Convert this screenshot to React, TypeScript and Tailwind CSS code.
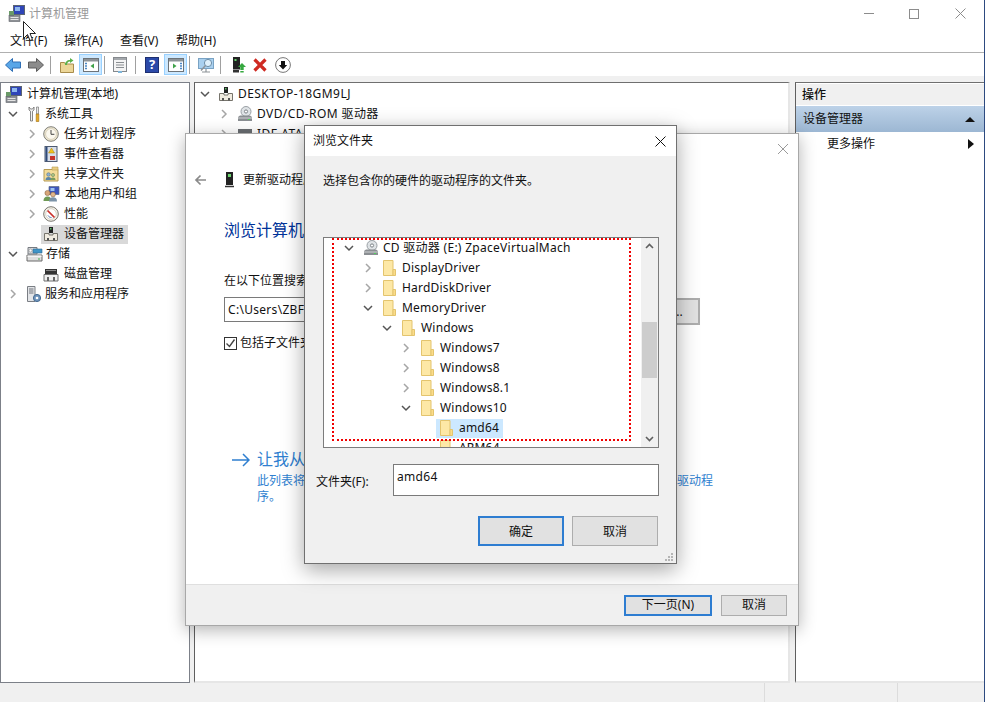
import React from 'react';

const Chevron = ({ open }: { open?: boolean }) => (
  <svg width="12" height="12" viewBox="0 0 12 12" fill="none" className="shrink-0">
    {open ? (
      <path d="M2 4l4 4 4-4" stroke="#555" strokeWidth="1.5" />
    ) : (
      <path d="M4 2l4 4-4 4" stroke="#a6a6a6" strokeWidth="1.5" />
    )}
  </svg>
);

const Folder = () => (
  <svg width="14" height="16" viewBox="0 0 14 16" className="shrink-0">
    <path d="M1.5 0.5h9.5v15h-9.5z" fill="#fde8a6" stroke="#e3c46e" />
    <path d="M11 9.5h2.5v6h-2.5z" fill="#fbdc8a" stroke="#e3c46e" />
  </svg>
);

const CdDrive = () => (
  <svg width="16" height="16" viewBox="0 0 16 16" className="shrink-0">
    <circle cx="9" cy="5.5" r="5" fill="#dfe3e6" stroke="#9aa0a5" />
    <circle cx="9" cy="5.5" r="1.6" fill="#fff" stroke="#7d8388" />
    <path d="M1 11l2-1.5h10l2 1.5v4H1z" fill="#8a8e92" />
    <path d="M1 11.5h14v1H1z" fill="#d0d3d5" />
    <rect x="11" y="13" width="2" height="1" fill="#4fd05a" />
  </svg>
);

const AtaDrive = () => (
  <svg width="16" height="16" viewBox="0 0 16 16" className="shrink-0">
    <path d="M1 3h14v4H1z" fill="#6a6e72" />
    <path d="M1 7h14v5H1z" fill="#bfc3c6" />
    <rect x="11" y="9" width="2" height="1" fill="#4fd05a" />
  </svg>
);

const DevMgr = () => (
  <svg width="16" height="16" viewBox="0 0 16 16" className="shrink-0">
    <path d="M6 1h4v6H6z" fill="#222" />
    <rect x="7" y="2" width="1.5" height="1.5" fill="#5ec46a" />
    <path d="M1.5 7.5h4.500V9h4V7.500h4.500v7H1.500z" fill="#f0ebe0" stroke="#77746c" />
    <path d="M4 12h2v2.500H4zM10 12h2v2.500h-2z" fill="#555" />
  </svg>
);

const CompMgmt = () => (
  <svg width="17" height="17" viewBox="0 0 17 17" className="shrink-0">
    <rect x="5.5" y="0.5" width="11" height="9" fill="#2f45b8" stroke="#5b6472" />
    <rect x="7" y="2" width="5" height="4" fill="#8fb8ee" />
    <path d="M1 6h5v5H1z" fill="#6a9a68" />
    <rect x="1" y="10.5" width="11" height="6" fill="#8d9095" stroke="#60636a" strokeWidth="0.6" />
    <path d="M2.500 12.500h8M2.500 14.500h8" stroke="#e4e4e4" />
  </svg>
);

const Tools = () => (
  <svg width="16" height="16" viewBox="0 0 16 16" className="shrink-0">
    <path d="M3 1v3l1.500 1.200V15h2V5.200L8 4V1L6.500 3h-2z" fill="#f2f2f2" stroke="#6b6b6b" strokeWidth="0.8" />
    <path d="M10.500 1h2v7h-2z" fill="#e8e8e8" stroke="#777" strokeWidth="0.7" />
    <path d="M10.200 8h2.600v7.500h-2.600z" fill="#e8ab24" stroke="#9c6c10" strokeWidth="0.6" />
  </svg>
);

const Clock = () => (
  <svg width="16" height="16" viewBox="0 0 16 16" className="shrink-0">
    <circle cx="8" cy="8" r="7.3" fill="#efe8d2" stroke="#7f7f78" />
    <circle cx="8" cy="8" r="5.4" fill="#fbf8ee" stroke="#c8c0a8" strokeWidth="0.6" />
    <path d="M8 4v4.300h3.400" stroke="#444" strokeWidth="1" fill="none" />
  </svg>
);

const EventLog = () => (
  <svg width="16" height="16" viewBox="0 0 16 16" className="shrink-0">
    <rect x="2" y="0.5" width="12" height="15" fill="#d8dee8" stroke="#4c5a72" />
    <path d="M2.500 1h2v14h-2z" fill="#2f4a7a" />
    <path d="M8.500 2l3 5h-6z" fill="#f2c21c" stroke="#a07e10" strokeWidth="0.5" />
    <rect x="7" y="10" width="5" height="4" fill="#c8342c" />
  </svg>
);

const Shared = () => (
  <svg width="16" height="16" viewBox="0 0 16 16" className="shrink-0">
    <path d="M1 3.500h14v11.500H1z" fill="#f3dc9a" stroke="#b59a52" />
    <path d="M9 1h6v3H9z" fill="#e9cd82" stroke="#b59a52" strokeWidth="0.6" />
    <circle cx="5.5" cy="8.5" r="1.8" fill="#8fb1cf" stroke="#4d6a80" strokeWidth="0.5" />
    <path d="M2.500 14c0-2 1-3 3-3s3 1 3 3z" fill="#5c86a8" />
    <circle cx="10" cy="9" r="1.6" fill="#a8c48a" stroke="#5f7a48" strokeWidth="0.5" />
    <path d="M7.500 14c0-2 1-2.600 2.500-2.600S12.500 12 12.500 14z" fill="#7a9c5c" />
  </svg>
);

const Users = () => (
  <svg width="17" height="16" viewBox="0 0 17 16" className="shrink-0">
    <path d="M6 0.500h10v8H6z" fill="#3d56bd" stroke="#5d6a84" strokeWidth="0.7" />
    <path d="M7.500 2h4v3h-4z" fill="#9dc2ee" />
    <circle cx="4.5" cy="7" r="2.6" fill="#d8a67a" stroke="#7a5a3c" strokeWidth="0.5" />
    <path d="M0.500 15c0-3 1.500-4.500 4-4.500S8.500 12 8.500 15z" fill="#6f9a56" />
    <circle cx="10" cy="8.5" r="2.4" fill="#e2b68a" stroke="#7a5a3c" strokeWidth="0.5" />
    <path d="M6 15.500c0-3 1.500-4.300 4-4.300s4 1.300 4 4.300z" fill="#7c93a8" />
  </svg>
);

const Perf = () => (
  <svg width="16" height="16" viewBox="0 0 16 16" className="shrink-0">
    <circle cx="8" cy="8" r="7.3" fill="#f8f5ec" stroke="#77756e" />
    <circle cx="8" cy="8" r="5.3" fill="#fff" stroke="#bdb8a8" strokeWidth="0.6" />
    <path d="M4.500 4.500l7 7" stroke="#c9302a" strokeWidth="1.7" />
    <path d="M5 9.500c1 1.500 2 2 3.500 2" stroke="#4a6ca8" strokeWidth="1" fill="none" />
  </svg>
);

const Storage = () => (
  <svg width="17" height="16" viewBox="0 0 17 16" className="shrink-0">
    <path d="M1 9h15v6H1z" fill="#dedede" stroke="#6b6b6b" />
    <path d="M1.500 9.500h14v1.500h-14z" fill="#f5f5f5" />
    <rect x="12" y="12.5" width="2" height="1" fill="#48b050" />
    <path d="M2 1.500h9v6.500H2z" fill="#d7d9dc" stroke="#767a80" />
    <path d="M7 3h9v4H7z" fill="#3f95c8" stroke="#2f6a90" strokeWidth="0.6" />
    <circle cx="4.5" cy="4.5" r="1.5" fill="#fff" stroke="#777" strokeWidth="0.5" />
  </svg>
);

const Disk = () => (
  <svg width="16" height="16" viewBox="0 0 16 16" className="shrink-0">
    <path d="M2 3h12v5H2z" fill="#333" />
    <path d="M3 4h10v1H3z" fill="#888" />
    <path d="M1 8.500h14v6.500H1z" fill="#efefef" stroke="#6e6e6e" />
    <path d="M4 11h2v4H4zM10 11h2v4h-2z" fill="#666" />
  </svg>
);

const Services = () => (
  <svg width="16" height="17" viewBox="0 0 16 17" className="shrink-0">
    <path d="M1.500 0.500h7.500v15H1.500z" fill="#e3e5e8" stroke="#7a7e84" />
    <path d="M3 3h4.500M3 5h4.500M3 7h4.500" stroke="#70757c" />
    <circle cx="11" cy="12" r="3.6" fill="#6f94bc" stroke="#466a90" />
    <circle cx="11" cy="12" r="1.3" fill="#fff" />
  </svg>
);

type TreeRow = { label: string; icon: React.ReactNode; top?: boolean; open?: boolean; leaf?: boolean; active?: boolean };

const leftRows: TreeRow[] = [
  { label: '系统工具', icon: <Tools />, top: true, open: true },
  { label: '任务计划程序', icon: <Clock /> },
  { label: '事件查看器', icon: <EventLog /> },
  { label: '共享文件夹', icon: <Shared /> },
  { label: '本地用户和组', icon: <Users /> },
  { label: '性能', icon: <Perf /> },
  { label: '设备管理器', icon: <DevMgr />, leaf: true, active: true },
  { label: '存储', icon: <Storage />, top: true, open: true },
  { label: '磁盘管理', icon: <Disk />, leaf: true },
  { label: '服务和应用程序', icon: <Services />, top: true },
];

const folderRows: { label: string; indent: string; open?: boolean; leaf?: boolean; active?: boolean }[] = [
  { label: 'DisplayDriver', indent: 'pl-[38px]' },
  { label: 'HardDiskDriver', indent: 'pl-[38px]' },
  { label: 'MemoryDriver', indent: 'pl-[38px]', open: true },
  { label: 'Windows', indent: 'pl-[57px]', open: true },
  { label: 'Windows7', indent: 'pl-[76px]' },
  { label: 'Windows8', indent: 'pl-[76px]' },
  { label: 'Windows8.1', indent: 'pl-[76px]' },
  { label: 'Windows10', indent: 'pl-[76px]', open: true },
  { label: 'amd64', indent: 'pl-[95px]', leaf: true, active: true },
  { label: 'ARM64', indent: 'pl-[95px]', leaf: true },
];

const Toolbar = () => (
  <div className="flex items-center h-[23px] bg-white pl-[5px]">
    <svg width="16" height="14" viewBox="0 0 16 14" className="shrink-0">
      <path d="M0.500 7L7.500 0.500V4H15.500v6H7.500v3.500z" fill="#58a6e8" stroke="#2f6fb5" />
    </svg>
    <svg width="16" height="14" viewBox="0 0 16 14" className="shrink-0 ml-[7px]">
      <path d="M15.500 7L8.500 0.500V4H0.500v6H8.500v3.500z" fill="#8c8c8c" stroke="#5c5c5c" />
    </svg>
    <div className="w-px h-[18px] bg-[#a0a0a0] ml-[6px]" />
    <svg width="14" height="16" viewBox="0 0 14 16" className="shrink-0 ml-[9px]">
      <path d="M0.500 5.500h4l1 1.500h8v8.500h-13z" fill="#ecd698" stroke="#a88c4c" />
      <path d="M5 8c0-3 2-5 5-5V1l3.500 2.500L10 6V4.500C8 4.500 7 6 7 8z" fill="#5cb14a" />
    </svg>
    <div className="ml-[5px] w-[23px] h-[21px] bg-[#cce8ff] border border-[#99d1ff] flex items-center justify-center">
      <svg width="16" height="14" viewBox="0 0 16 14">
        <rect x="0.5" y="0.5" width="15" height="13" fill="#fff" stroke="#6d7378" />
        <path d="M1 1h14v2.500H1z" fill="#8d9398" />
        <path d="M2 5.500h2M2 8h2M2 10.500h2" stroke="#4b88c6" strokeWidth="1.3" />
        <path d="M11 5.500v5L7.500 8z" fill="#3fa24a" />
      </svg>
    </div>
    <div className="w-px h-[18px] bg-[#a0a0a0] ml-[2px]" />
    <svg width="14" height="16" viewBox="0 0 14 16" className="shrink-0 ml-2">
      <rect x="0.5" y="0.5" width="13" height="14" fill="#f4f4f4" stroke="#85898d" />
      <path d="M1 1h12v2H1z" fill="#a4a8ac" />
      <path d="M3 5.500h8M3 8h8M3 10.500h8" stroke="#8a8e92" />
      <rect x="5" y="14" width="4" height="2" fill="#7fb6da" />
    </svg>
    <div className="w-px h-[18px] bg-[#a0a0a0] ml-2" />
    <div className="ml-[9px] w-[14px] h-4 bg-[#2b49a8] border border-[#1d2f70] flex items-center justify-center text-white font-bold text-[13px] leading-none">
      ?
    </div>
    <div className="ml-[5px] w-[23px] h-[21px] bg-[#cce8ff] border border-[#99d1ff] flex items-center justify-center">
      <svg width="16" height="14" viewBox="0 0 16 14">
        <rect x="0.5" y="0.5" width="15" height="13" fill="#fff" stroke="#6d7378" />
        <path d="M1 1h14v2.500H1z" fill="#8d9398" />
        <path d="M12 5.500h2M12 8h2M12 10.500h2" stroke="#4b88c6" strokeWidth="1.3" />
        <path d="M5 5.500v5L8.500 8z" fill="#3fa24a" />
      </svg>
    </div>
    <div className="w-px h-[18px] bg-[#a0a0a0] ml-[2px]" />
    <svg width="16" height="16" viewBox="0 0 16 16" className="shrink-0 ml-2">
      <rect x="0.5" y="1.5" width="15" height="10" fill="#a9d0ef" stroke="#7aa3c4" />
      <path d="M4 15h8M8 12v3" stroke="#8d9398" strokeWidth="1.2" />
      <circle cx="10" cy="6" r="3.6" fill="#dff0fb" stroke="#6d8ea8" />
      <path d="M7.500 8.500L3 13.500" stroke="#8d9398" strokeWidth="1.5" />
    </svg>
    <div className="w-px h-[18px] bg-[#a0a0a0] ml-[6px]" />
    <svg width="14" height="16" viewBox="0 0 14 16" className="shrink-0 ml-[11px]">
      <path d="M1 0h7v12.500H1z" fill="#222" />
      <rect x="2.5" y="2" width="2" height="2" fill="#64d06c" />
      <path d="M1 13h6v2.500H1z" fill="#333" />
      <path d="M10 6l4 4h-2.300v3h-3.400v-3H6z" fill="#35a83f" />
      <path d="M8.300 14h3.400v1.500H8.300z" fill="#35a83f" />
    </svg>
    <svg width="14" height="14" viewBox="0 0 14 14" className="shrink-0 ml-[7px]">
      <path d="M1.500 1.500l11 11M12.500 1.500l-11 11" stroke="#cf2a22" strokeWidth="3.2" />
    </svg>
    <svg width="16" height="16" viewBox="0 0 16 16" className="shrink-0 ml-2">
      <circle cx="8" cy="8" r="7.4" fill="#fff" stroke="#777" />
      <path d="M8 12.500L3.800 8H6V4h4v4h2.200z" fill="#111" />
    </svg>
  </div>
);

const LeftPane = () => (
  <div className="w-[190px] h-full bg-white border border-[#7c8088] pt-px shrink-0">
    <div className="h-5 flex items-center pl-[4px]">
      <CompMgmt />
      <span className="ml-[5px]">计算机管理(本地)</span>
    </div>
    {leftRows.map((row) => (
      <div key={row.label} className={`h-5 flex items-center ${row.top ? 'pl-[6px]' : 'pl-[25px]'}`}>
        {row.leaf ? <div className="w-3 shrink-0" /> : <Chevron open={row.open} />}
        {row.active ? (
          <div className="flex items-center h-[19px] bg-[#d9d9d9] ml-[3px] pl-[2px] pr-[4px]">
            {row.icon}
            <span className="ml-[5px]">{row.label}</span>
          </div>
        ) : (
          <div className="flex items-center h-[19px]">
            <div className={row.top ? 'ml-[7px]' : 'ml-[5px]'}>{row.icon}</div>
            <span className={row.top ? 'ml-[3px]' : 'ml-[5px]'}>{row.label}</span>
          </div>
        )}
      </div>
    ))}
  </div>
);

const CenterPane = () => (
  <div className="ml-[4px] w-[596px] h-full shrink-0 bg-white border-l border-t border-l-[#5f5f5f] border-t-[#6f6f6f] border-r-2 border-b-2 border-r-[#e6e6e6] border-b-[#e6e6e6] pt-px pl-[4px]">
    <div className="h-5 flex items-center">
      <Chevron open />
      <div className="ml-[7px]"><DevMgr /></div>
      <span className="ml-[4px] tracking-[0.45px]">DESKTOP-18GM9LJ</span>
    </div>
    <div className="h-5 flex items-center pl-[19px]">
      <Chevron />
      <div className="ml-[7px]"><CdDrive /></div>
      <span className="ml-[4px] tracking-[0.4px]">DVD/CD-ROM 驱动器</span>
    </div>
    <div className="h-5 flex items-center pl-[19px]">
      <Chevron />
      <div className="ml-[7px]"><AtaDrive /></div>
      <span className="ml-[4px] tracking-[0.4px]">IDE ATA/ATAPI 控制器</span>
    </div>
  </div>
);

const RightPane = () => (
  <div className="ml-[5px] flex-1 h-full bg-white border-l border-t border-l-[#5f5f5f] border-t-[#6f6f6f] border-b-2 border-b-[#e6e6e6]">
    <div className="h-[21px] mt-px bg-[#f0f0f0] flex items-center pl-[6px] pt-[1px] font-medium">操作</div>
    <div className="h-[26px] mt-px bg-gradient-to-b from-[#bdd2e8] to-[#9cb7d3] flex items-center justify-between pl-[7px] pr-[9px]">
      <span>设备管理器</span>
      <svg width="10" height="5" viewBox="0 0 10 5"><path d="M5 0l5 5H0z" fill="#111" /></svg>
    </div>
    <div className="h-[24px] flex items-center justify-between pl-[31px] pr-[10px]">
      <span>更多操作</span>
      <svg width="6" height="10" viewBox="0 0 6 10"><path d="M0 0l6 5-6 5z" fill="#111" /></svg>
    </div>
  </div>
);

const Wizard = () => (
  <div className="absolute left-[185px] top-[133px] w-[614px] h-[493px] bg-white border border-[#a8a8a8] shadow-[0_4px_16px_rgba(0,0,0,0.3)] flex flex-col">
    <div className="flex justify-end pt-[9px] pr-[9px] h-[34px]">
      <svg width="12" height="12" viewBox="0 0 12 12"><path d="M1 1l10 10M11 1L1 11" stroke="#9a9a9a" /></svg>
    </div>
    <div className="flex items-center h-[24px] pl-[8px]">
      <svg width="12" height="12" viewBox="0 0 12 12" className="shrink-0">
        <path d="M12 6H2M6.500 1.500L2 6l4.500 4.500" stroke="#8a8a8a" strokeWidth="1.7" fill="none" />
      </svg>
      <svg width="9" height="16" viewBox="0 0 9 16" className="shrink-0 ml-[19px]">
        <path d="M1 0h7v13H1z" fill="#222" />
        <rect x="3" y="2" width="3" height="3" fill="#6bd46f" />
        <path d="M0 14.500h9" stroke="#333" strokeWidth="1.5" />
      </svg>
      <span className="ml-[9px]">更新驱动程序</span>
    </div>
    <div className="pl-[38px] flex-1 flex flex-col">
      <div className="text-[16px] text-[#003399] leading-6 mt-[26px]">浏览计算机上的驱动程序</div>
      <div className="leading-5 mt-[29px]">在以下位置搜索驱动程序:</div>
      <div className="flex items-start mt-[6px]">
        <div className="w-[385px] h-[25px] border border-[#7a7a7a] flex items-center pl-[3px] tracking-[0.3px]">C:\Users\ZBF\Desktop</div>
        <div className="ml-[8px] w-[83px] h-[27px] mt-px bg-[#e1e1e1] border-2 border-[#adadad] flex items-center justify-center">浏览(R)...</div>
      </div>
      <div className="flex items-center mt-[9px]">
        <div className="w-[13px] h-[13px] border border-[#333] flex items-center justify-center">
          <svg width="11" height="11" viewBox="0 0 11 11"><path d="M1.500 5.500l3 3 5-7" stroke="#444" strokeWidth="1.4" fill="none" /></svg>
        </div>
        <span className="ml-[3px]">包括子文件夹(I)</span>
      </div>
      <div className="flex mt-[95px] pl-[8px]">
        <svg width="18" height="14" viewBox="0 0 18 14" className="shrink-0 mt-[6px]">
          <path d="M0 7h17M11 1l6 6-6 6" stroke="#2f7fd0" strokeWidth="1.5" fill="none" />
        </svg>
        <div className="ml-[7px] w-[458px]">
          <div className="text-[16px] leading-6 text-[#2f7fd0]">让我从计算机上的可用驱动程序列表中选取</div>
          <div className="leading-4 mt-[2px] text-[#2f7fd0]">{'此列表将显示与该设备兼容的已安装的驱动程序\uFF0C以及与该设备同一类别的所有驱动程序\u3002'}</div>
        </div>
      </div>
    </div>
    <div className="h-[41px] bg-[#f0f0f0] border-t border-t-[#dfdfdf] flex items-center justify-end pr-[11px]">
      <div className="w-[88px] h-[21px] bg-[#e1e1e1] border-2 border-[#2e7dd1] flex items-center justify-center pb-px">下一页(N)</div>
      <div className="ml-[9px] w-[66px] h-[21px] bg-[#e1e1e1] border border-[#adadad] flex items-center justify-center pb-px">取消</div>
    </div>
  </div>
);

const BrowseDialog = () => (
  <div className="absolute left-[304px] top-[125px] w-[373px] h-[439px] bg-[#f0f0f0] border border-[#707070] shadow-[0_6px_20px_rgba(0,0,0,0.35)] flex flex-col">
    <div className="h-[30px] bg-white flex items-center justify-between pl-[8px] pr-[10px] shrink-0">
      <span>浏览文件夹</span>
      <svg width="11" height="11" viewBox="0 0 11 11"><path d="M0.500 0.500l10 10M10.500 0.500l-10 10" stroke="#111" /></svg>
    </div>
    <div className="pl-[18px] mt-[15px] leading-5">选择包含你的硬件的驱动程序的文件夹。</div>
    <div className="relative ml-[18px] mt-[46px] w-[336px] h-[211px] bg-white border border-[#7c7c7c] flex overflow-hidden shrink-0">
      <div className="flex-1 overflow-hidden">
        <div className="h-5 flex items-center pl-[19px]">
          <Chevron open />
          <div className="ml-2"><CdDrive /></div>
          <span className="ml-[4px] tracking-[0.28px]">CD 驱动器 (E:) ZpaceVirtualMach</span>
        </div>
        {folderRows.map((row) => (
          <div key={row.label} className={`h-5 flex items-center ${row.indent}`}>
            {row.leaf ? <div className="w-3 shrink-0" /> : <Chevron open={row.open} />}
            {row.active ? (
              <div className="flex items-center h-[19px] bg-[#cce8ff] ml-[5px] pl-[3px] pr-[4px]">
                <Folder />
                <span className="ml-[6px] tracking-[0.2px]">{row.label}</span>
              </div>
            ) : (
              <div className="flex items-center h-[19px]">
                <div className="ml-2"><Folder /></div>
                <span className="ml-[6px] tracking-[0.2px]">{row.label}</span>
              </div>
            )}
          </div>
        ))}
      </div>
      <div className="w-[17px] h-full bg-[#f0f0f0] flex flex-col items-center justify-between py-[5px] relative shrink-0">
        <svg width="9" height="6" viewBox="0 0 9 6"><path d="M1 5l3.500-3.500L8 5" stroke="#606060" strokeWidth="1.6" fill="none" /></svg>
        <svg width="9" height="6" viewBox="0 0 9 6"><path d="M1 1l3.500 3.500L8 1" stroke="#606060" strokeWidth="1.6" fill="none" /></svg>
        <div className="absolute left-px top-[84px] w-[15px] h-[56px] bg-[#cdcdcd]" />
      </div>
      <div className="absolute left-[8px] top-0 w-[299px] h-[203px] border-2 border-dotted border-[#f00000]" />
    </div>
    <div className="flex items-center mt-[16px] pl-[11px]">
      <span className="w-[77px] pt-[3px]">文件夹(F):</span>
      <div className="w-[266px] h-[32px] bg-white border border-[#7a7a7a] pl-[3px] pt-[2px] leading-5 tracking-[0.3px]">amd64</div>
    </div>
    <div className="flex justify-end mt-[20px] pr-[18px]">
      <div className="w-[86px] h-[30px] bg-[#e1e1e1] border-2 border-[#2e7dd1] flex items-center justify-center pt-px">确定</div>
      <div className="ml-[8px] w-[86px] h-[30px] bg-[#e1e1e1] border border-[#adadad] flex items-center justify-center pt-px">取消</div>
    </div>
    <div className="flex-1 flex items-end justify-end pr-[3px] pb-[2px]">
      <svg width="8" height="8" viewBox="0 0 8 8" fill="#b5b5b5">
        <path d="M6 0h2v2H6zM3 3h2v2H3zM6 3h2v2H6zM0 6h2v2H0zM3 6h2v2H3zM6 6h2v2H6z" />
      </svg>
    </div>
  </div>
);

export default function App() {
  return (
    <div className="relative w-[985px] h-[702px] overflow-hidden bg-white text-[12px] text-[#111111] font-['Noto_Sans','Noto_Sans_CJK_SC',sans-serif]">
      <div className="flex flex-col h-full border-r border-r-[#2d4a80]">
        <div className="h-[29px] flex items-center pl-[8px] pb-[2px] shrink-0">
          <CompMgmt />
          <span className="ml-[4px] text-[#999999]">计算机管理</span>
          <div className="ml-auto flex items-center pr-[18px]">
            <div className="w-[10px] h-px bg-[#8c8c8c]" />
            <div className="ml-[35px] w-[10px] h-[10px] border border-[#8c8c8c]" />
            <svg width="11" height="11" viewBox="0 0 11 11" className="ml-[36px]"><path d="M0.500 0.500l10 10M10.500 0.500l-10 10" stroke="#8c8c8c" /></svg>
          </div>
        </div>
        <div className="h-[23px] flex items-center pl-[10px] shrink-0">
          <span className="w-[54px]">文件(F)</span>
          <span className="w-[56px]">操作(A)</span>
          <span className="w-[56px]">查看(V)</span>
          <span>帮助(H)</span>
        </div>
        <div className="border-t border-t-[#b0b0b0] shrink-0"><Toolbar /></div>
        <div className="flex-1 bg-[#f0f0f0] flex pt-[6px] min-h-0">
          <LeftPane />
          <CenterPane />
          <RightPane />
        </div>
        <div className="h-[19px] bg-[#f0f0f0] shrink-0 flex justify-end pr-[4px]">
          <div className="w-[133px] border-l border-l-[#dcdcdc]" />
          <div className="w-[83px] border-l border-l-[#dcdcdc]" />
        </div>
      </div>
      <Wizard />
      <BrowseDialog />
      <svg width="14" height="22" viewBox="0 0 14 22" className="absolute left-[23px] top-[21px]">
        <path d="M0.500 0.500v17l4-4 2.500 6 2.500-1-2.500-6h5.500z" fill="#fff" stroke="#222" />
      </svg>
    </div>
  );
}
